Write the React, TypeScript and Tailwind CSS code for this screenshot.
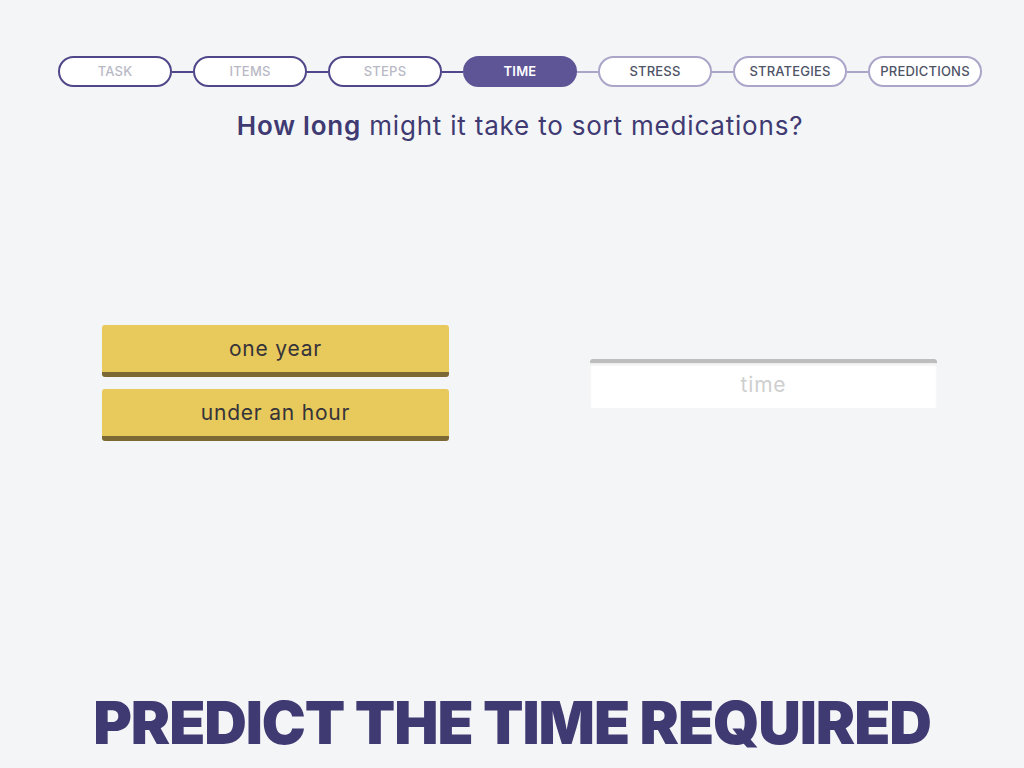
import React from 'react';

const steps = ['TASK', 'ITEMS', 'STEPS', 'TIME', 'STRESS', 'STRATEGIES', 'PREDICTIONS'];
const activeIndex = 3;

const StepPill: React.FC<{ label: string; index: number }> = ({ label, index }) => {
  if (index === activeIndex) {
    return (
      <div className="w-[114px] h-[31px] rounded-full bg-[#5e5596] border-2 border-[#5e5596] flex items-center justify-center text-[13px] font-semibold text-white tracking-[0.2px]">
        {label}
      </div>
    );
  }
  const done = index < activeIndex;
  return (
    <div
      className={`w-[114px] h-[31px] rounded-full bg-white border-2 flex items-center justify-center text-[13px] font-medium tracking-[0.2px] ${
        done ? 'border-[#4f4789] text-[#b9b9c6]' : 'border-[#aaa5c9] text-[#4e5366]'
      }`}
    >
      {label}
    </div>
  );
};

export default function App() {
  return (
    <div
      className="h-[768px] w-full bg-[#f4f5f7] flex flex-col items-center overflow-hidden"
      style={{ fontFamily: 'Inter, "Noto Sans", sans-serif' }}
    >
      <div className="flex-1 w-full pl-[16px] flex flex-col items-center">
        {/* stepper */}
        <div className="mt-[56px] flex items-center">
          {steps.map((s, i) => (
            <React.Fragment key={s}>
              {i > 0 && (
                <div className={`w-[21px] h-[2px] ${i <= activeIndex ? 'bg-[#4f4789]' : 'bg-[#aaa5c9]'}`} />
              )}
              <StepPill label={s} index={i} />
            </React.Fragment>
          ))}
        </div>

        <h1 className="mt-[23px] text-[26px] leading-[32px] text-[#403a72] tracking-[0.8px]">
          <span className="font-semibold">How long</span> might it take to sort medications?
        </h1>

        {/* answers */}
        <div className="flex-1 w-full flex items-center justify-between pl-[86px] pr-[87px] pb-[62px]">
          <div className="flex flex-col gap-[12px] w-[347px]">
            {['one year', 'under an hour'].map((a) => (
              <div
                key={a}
                className="h-[52px] rounded-[3px] bg-[#e8c95b] border-b-[5px] border-[#7c6833] flex items-center justify-center text-[21px] tracking-[0.8px] text-[#35343a]"
              >
                {a}
              </div>
            ))}
          </div>
          <div className="w-[347px] h-[49px] rounded-[3px] bg-white border-t-[4px] border-[#bdbdbd] shadow-[inset_0_2px_3px_rgba(0,0,0,0.08)] flex items-center justify-center text-[21px] tracking-[0.8px] text-[#cfcfcf]">
            time
          </div>
        </div>
      </div>

      <div className="mb-[8px] text-[59px] leading-[74px] font-black text-[#403a72] tracking-[-1.1px]">
        PREDICT THE TIME REQUIRED
      </div>
    </div>
  );
}
